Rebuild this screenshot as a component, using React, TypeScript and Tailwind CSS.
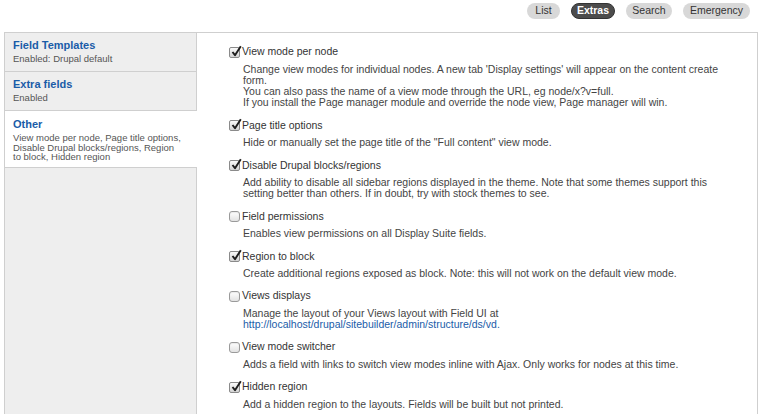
const font = "font-['Liberation_Sans',Arial,sans-serif]";

type Item = {
  label: string;
  checked: boolean;
  lines: string[];
  link?: string;
};

const items: Item[] = [
  {
    label: 'View mode per node',
    checked: true,
    lines: [
      "Change view modes for individual nodes. A new tab 'Display settings' will appear on the content create",
      'form.',
      'You can also pass the name of a view mode through the URL, eg node/x?v=full.',
      'If you install the Page manager module and override the node view, Page manager will win.',
    ],
  },
  {
    label: 'Page title options',
    checked: true,
    lines: ['Hide or manually set the page title of the "Full content" view mode.'],
  },
  {
    label: 'Disable Drupal blocks/regions',
    checked: true,
    lines: [
      'Add ability to disable all sidebar regions displayed in the theme. Note that some themes support this',
      'setting better than others. If in doubt, try with stock themes to see.',
    ],
  },
  {
    label: 'Field permissions',
    checked: false,
    lines: ['Enables view permissions on all Display Suite fields.'],
  },
  {
    label: 'Region to block',
    checked: true,
    lines: ['Create additional regions exposed as block. Note: this will not work on the default view mode.'],
  },
  {
    label: 'Views displays',
    checked: false,
    lines: ['Manage the layout of your Views layout with Field UI at'],
    link: 'http://localhost/drupal/sitebuilder/admin/structure/ds/vd.',
  },
  {
    label: 'View mode switcher',
    checked: false,
    lines: ['Adds a field with links to switch view modes inline with Ajax. Only works for nodes at this time.'],
  },
  {
    label: 'Hidden region',
    checked: true,
    lines: ['Add a hidden region to the layouts. Fields will be built but not printed.'],
  },
];

function CheckBox({ checked }: { checked: boolean }) {
  if (!checked) {
    return (
      <span className="inline-block w-[11px] h-[11px] rounded-[3px] border border-[#9a9a9a] bg-gradient-to-b from-white to-[#e2e2e2] shadow-[inset_0_1px_1px_rgba(0,0,0,0.08)]" />
    );
  }
  return (
    <span className="relative inline-block w-[11px] h-[11px] rounded-[2px] border border-[#8a8a8a] bg-gradient-to-b from-[#fafafa] to-[#d4d4d4]">
      <svg className="absolute left-[1px] top-[-3px] w-[11px] h-[12px]" viewBox="0 0 11 12">
        <path d="M1.5 7 L4 10.2 L9.8 1.2" stroke="#1d1d1d" strokeWidth="1.9" fill="none" strokeLinejoin="round" />
      </svg>
    </span>
  );
}

const tabs = [
  { title: 'Field Templates', summary: ['Enabled: Drupal default'], h: 'h-[39px]', active: false },
  { title: 'Extra fields', summary: ['Enabled'], h: 'h-[39px]', active: false },
  {
    title: 'Other',
    summary: ['View mode per node, Page title options,', 'Disable Drupal blocks/regions, Region', 'to block, Hidden region'],
    h: 'h-[57px]',
    active: true,
  },
];

export default function App() {
  return (
    <div className={`w-[760px] h-[414px] overflow-hidden bg-white ${font}`}>
      {/* Top buttons */}
      <div className="h-[32px] flex items-start pt-[3px] pl-[527px] gap-[11px] text-[10.5px]">
        <span className="w-[33px] h-[16px] rounded-[8px] bg-[#d8d8d8] text-[#333] flex items-center justify-center">List</span>
        <span className="w-[44px] h-[16px] rounded-[8px] bg-[#4c4c4c] border border-[#333] text-white font-bold flex items-center justify-center">Extras</span>
        <span className="w-[46px] h-[16px] rounded-[8px] bg-[#d8d8d8] text-[#333] flex items-center justify-center">Search</span>
        <span className="w-[67px] h-[16px] rounded-[8px] bg-[#d8d8d8] text-[#333] flex items-center justify-center">Emergency</span>
      </div>

      {/* Vertical tabs box */}
      <div className="ml-[4px] w-[754px] h-[382px] flex border-t border-l border-r border-[#cfcfcf]">
        <div className="w-[192px] flex flex-col">
          {tabs.map((t) => (
            <div
              key={t.title}
              className={`${t.h} px-[8px] pt-[6px] border-b border-[#cfcfcf] ${
                t.active ? 'bg-white pt-[7px]' : 'bg-[#eeeeee] border-r'
              }`}
            >
              <div className="text-[11px] leading-[13px] font-bold text-[#1a5ca8]">{t.title}</div>
              <div className={`text-[9.5px] text-[#555] ${t.active ? 'leading-[9.5px] mt-[2px]' : 'leading-[12px] mt-[1px]'}`}>
                {t.summary.map((s) => (
                  <div key={s} className="whitespace-nowrap">{s}</div>
                ))}
              </div>
            </div>
          ))}
          <div className="flex-1 bg-[#eeeeee] border-r border-[#cfcfcf]" />
        </div>

        {/* Content */}
        <div className="flex-1 pl-[32px] pt-[12px]">
          {items.map((it) => (
            <div key={it.label} className="mb-[10px]">
              <div className="h-[14px] flex items-center gap-[1px] text-[10.5px] text-[#333]">
                <CheckBox checked={it.checked} />
                <span className="ml-[1px]">{it.label}</span>
              </div>
              <div className="mt-[4.5px] pl-[14px] text-[10.5px] leading-[11.3px] text-[#444]">
                {it.lines.map((l) => (
                  <div key={l} className="whitespace-nowrap">{l}</div>
                ))}
                {it.link && <div className="whitespace-nowrap text-[#1a5ca8]">{it.link}</div>}
              </div>
            </div>
          ))}
        </div>
      </div>
    </div>
  );
}
